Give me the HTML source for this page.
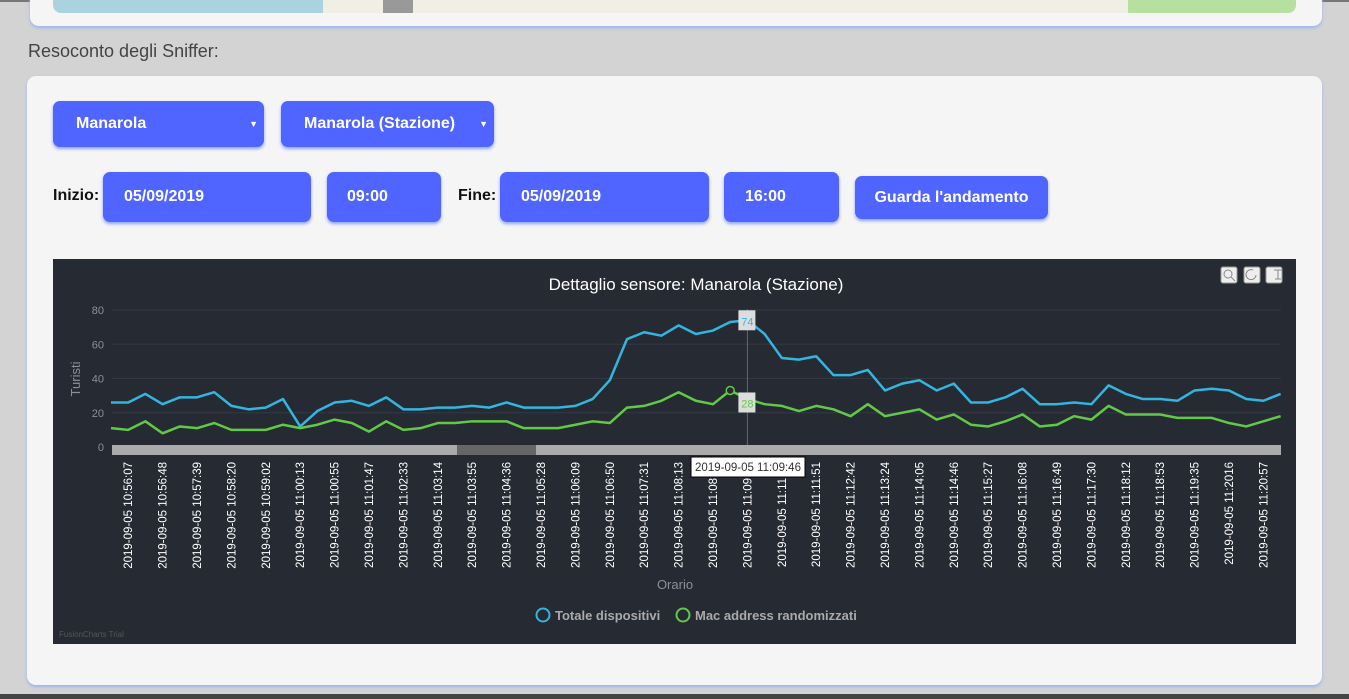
<!DOCTYPE html>
<html><head><meta charset="utf-8">
<style>
html,body{margin:0;padding:0;}
body{width:1349px;height:699px;background:#d3d3d3;position:relative;overflow:hidden;font-family:"Liberation Sans",sans-serif;}
.card{position:absolute;background:#f5f5f5;border-radius:9px;box-shadow:0 2px 3px #9bb4ee;}
.topbar{position:absolute;left:0;top:0;width:1349px;height:2px;background:#777;}
.map{position:absolute;left:53px;top:0;width:1243px;height:13px;background:#f1eee6;border-radius:0 0 8px 8px;overflow:hidden;}
.btn{position:absolute;background:#5064ff;color:#fff;font-weight:bold;font-size:16px;border-radius:7px;box-shadow:0 2px 3px #8aa3f5;box-sizing:border-box;display:flex;align-items:center;}
.lbl{position:absolute;font-size:16px;font-weight:bold;color:#111;}
</style></head><body>
<div class="topbar"></div>
<div class="card" style="left:30px;top:-10px;width:1292px;height:36px;"></div>
<div class="map"><div style="position:absolute;left:0;top:0;width:270px;height:13px;background:#aad3df"></div><div style="position:absolute;left:1075px;top:0;width:168px;height:13px;background:#b5e0a0"></div><div style="position:absolute;left:330px;top:0;width:30px;height:13px;background:#999"></div></div>
<div style="position:absolute;left:28px;top:41px;font-size:18px;color:#444;">Resoconto degli Sniffer:</div>
<div class="card" style="left:27px;top:76px;width:1295px;height:609px;"></div>
<div class="btn" style="left:53px;top:101px;width:211px;height:46px;padding-left:23px;">Manarola<span style="position:absolute;right:6px;font-size:9px">▼</span></div>
<div class="btn" style="left:281px;top:101px;width:213px;height:46px;padding-left:23px;">Manarola (Stazione)<span style="position:absolute;right:6px;font-size:9px">▼</span></div>
<div class="lbl" style="left:53px;top:187px;">Inizio:</div>
<div class="btn" style="left:103px;top:172px;width:208px;height:50px;padding-left:21px;">05/09/2019</div>
<div class="btn" style="left:327px;top:172px;width:114px;height:50px;padding-left:20px;">09:00</div>
<div class="lbl" style="left:458px;top:187px;">Fine:</div>
<div class="btn" style="left:500px;top:172px;width:209px;height:50px;padding-left:21px;">05/09/2019</div>
<div class="btn" style="left:724px;top:172px;width:115px;height:50px;padding-left:21px;">16:00</div>
<div class="btn" style="left:855px;top:176px;width:193px;height:43px;justify-content:center;">Guarda l'andamento</div>
<svg id="ch" style="position:absolute;left:53px;top:259px" width="1243" height="385" xmlns="http://www.w3.org/2000/svg"></svg>
<div style="position:absolute;left:0;top:694px;width:1349px;height:5px;background:#444"></div>
<script>
var B=[26,26,31,25,29,29,32,24,22,23,28,12,21,26,27,24,29,22,22,23,23,24,23,26,23,23,23,24,28,39,63,67,65,71,66,68,73,74,66,52,51,53,42,42,45,33,37,39,33,37,26,26,29,34,25,25,26,25,36,31,28,28,27,33,34,33,28,27,31];
var G=[11,10,15,8,12,11,14,10,10,10,13,11,13,16,14,9,15,10,11,14,14,15,15,15,11,11,11,13,15,14,23,24,27,32,27,25,33,28,25,24,21,24,22,18,25,18,20,22,16,19,13,12,15,19,12,13,18,16,24,19,19,19,17,17,17,14,12,15,18];
var T=["10:56:07","10:56:48","10:57:39","10:58:20","10:59:02","11:00:13","11:00:55","11:01:47","11:02:33","11:03:14","11:03:55","11:04:36","11:05:28","11:06:09","11:06:50","11:07:31","11:08:13","11:08:54","11:09:35","11:11:10","11:11:51","11:12:42","11:13:24","11:14:05","11:14:46","11:15:27","11:16:08","11:16:49","11:17:30","11:18:12","11:18:53","11:19:35","11:2016","11:20:57"];
var ox=-53,oy=-259;
function X(i){return 111+i*17.2+ox;}function Y(v){return 447-v*1.7125+oy;}
var s='<rect width="1243" height="385" fill="#262a33"/>';
var F='font-family="Liberation Sans,sans-serif"';
s+='<text x="643" y="31" text-anchor="middle" fill="#fff" font-size="17" '+F+'>Dettaglio sensore: Manarola (Stazione)</text>';
[0,20,40,60,80].forEach(function(v){s+='<line x1="59" x2="1228" y1="'+Y(v)+'" y2="'+Y(v)+'" stroke="#333844"/>';s+='<text x="51" y="'+(Y(v)+4)+'" text-anchor="end" fill="#8a8f99" font-size="11" '+F+'>'+v+'</text>';});
s+='<text transform="translate(27,120) rotate(-90)" text-anchor="middle" fill="#8a8f99" font-size="13" '+F+'>Turisti</text>';
s+='<rect x="59" y="186" width="1169" height="10" fill="#aaa"/><rect x="404" y="186" width="79" height="10" fill="#666"/>';
s+='<line x1="'+X(37)+'" x2="'+X(37)+'" y1="50" y2="186" stroke="#666"/>';
function pl(a,c){return '<polyline fill="none" stroke="'+c+'" stroke-width="2.5" stroke-linejoin="round" points="'+a.map(function(v,i){return X(i)+','+Y(v)}).join(' ')+'"/>';}
s+=pl(B,'#33b5e0')+pl(G,'#62c946');
s+='<circle cx="'+X(36)+'" cy="'+Y(33)+'" r="4" fill="#262a33" stroke="#62c946" stroke-width="1.5"/>';
s+='<rect x="'+(X(37)-9)+'" y="'+(Y(74)-10)+'" width="17" height="20" fill="#ddd"/><text x="'+X(37)+'" y="'+(Y(74)+5)+'" text-anchor="middle" fill="#33b5e0" font-size="11" '+F+'>74</text>';
s+='<rect x="'+(X(37)-9)+'" y="'+(Y(26)-10)+'" width="17" height="20" fill="#ddd"/><text x="'+X(37)+'" y="'+(Y(26)+5)+'" text-anchor="middle" fill="#62c946" font-size="11" '+F+'>28</text>';
T.forEach(function(t,k){var x=X(2*k+1)+4;s+='<text transform="translate('+x+',203) rotate(-90)" text-anchor="end" fill="#fff" font-size="11.5" '+F+'>2019-09-05 '+t+'</text>';});
s+='<rect x="645" y="199" width="100" height="20" fill="#262a33"/>';
s+='<rect x="638" y="198" width="114" height="20" fill="#fff" stroke="#000"/><text x="695" y="212" text-anchor="middle" fill="#333" font-size="11.5" '+F+'>2019-09-05 11:09:46</text>';
s+='<text x="622" y="330" text-anchor="middle" fill="#8a8f99" font-size="13" '+F+'>Orario</text>';
s+='<circle cx="490" cy="356" r="6.5" fill="none" stroke="#33b5e0" stroke-width="2"/><text x="502" y="361" fill="#aaa" font-size="13" font-weight="bold" '+F+'>Totale dispositivi</text>';
s+='<circle cx="630" cy="356" r="6.5" fill="none" stroke="#62c946" stroke-width="2"/><text x="642" y="361" fill="#aaa" font-size="13" font-weight="bold" '+F+'>Mac address randomizzati</text>';
s+='<text x="6" y="378" fill="#555" font-size="8" '+F+'>FusionCharts Trial</text>';
[1168,1191,1213].forEach(function(x){s+='<rect x="'+x+'" y="8" width="16" height="16" rx="2" fill="#eee" stroke="#999"/>';});
s+='<circle cx="1175" cy="15" r="4" fill="none" stroke="#888"/><path d="M1178 18 L1182 22" stroke="#888"/><path d="M1203 16 a5 5 0 1 1 -3 -5" fill="none" stroke="#888"/><path d="M1221 11 h8 M1225 11 v9 M1222 20 h6" stroke="#888"/>';
document.getElementById('ch').innerHTML=s;
</script>
</body></html>
